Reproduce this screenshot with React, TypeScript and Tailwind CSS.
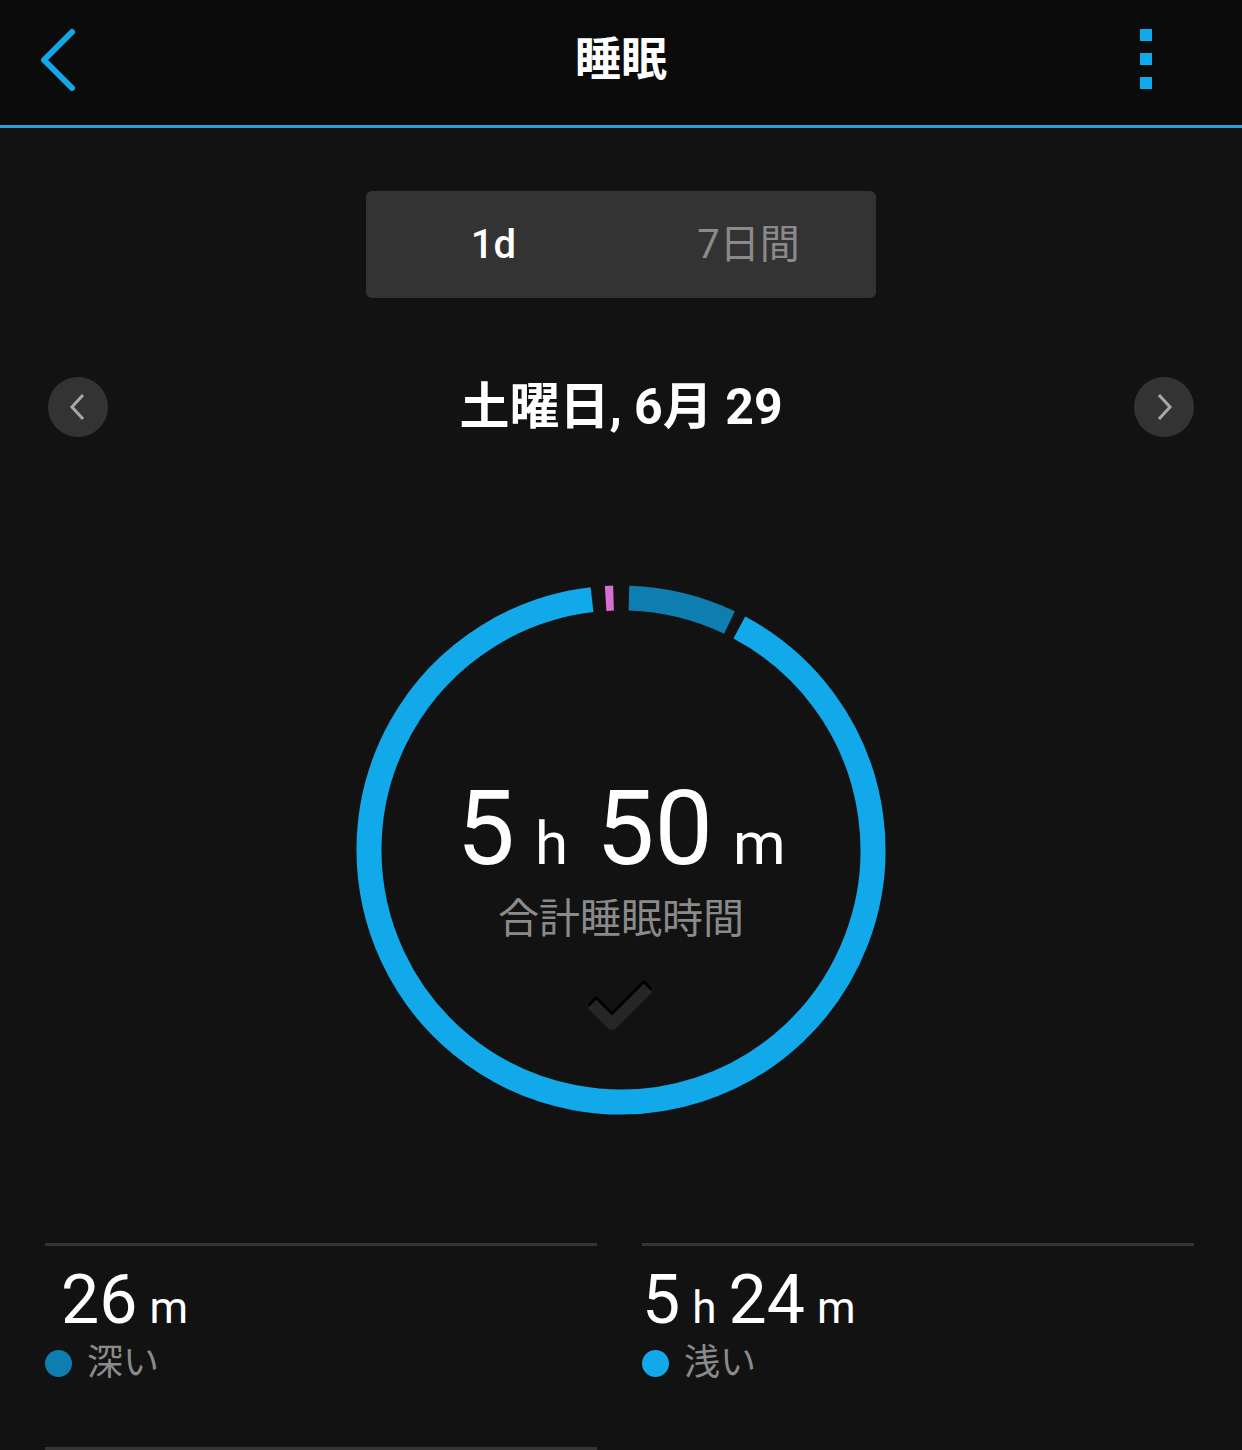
import React from 'react'

const FONT = { fontFamily: 'Roboto, "Noto Sans CJK JP", sans-serif' }

// 角度は真上を0°として時計回り
function arc(cx: number, cy: number, r: number, a0: number, a1: number) {
  const rad = (a: number) => (a * Math.PI) / 180
  const x0 = cx + r * Math.sin(rad(a0))
  const y0 = cy - r * Math.cos(rad(a0))
  const x1 = cx + r * Math.sin(rad(a1))
  const y1 = cy - r * Math.cos(rad(a1))
  const large = a1 - a0 > 180 ? 1 : 0
  return `M ${x0} ${y0} A ${r} ${r} 0 ${large} 1 ${x1} ${y1}`
}

function SleepRing() {
  const c = 270
  const r = 252
  return (
    <svg width="540" height="540" viewBox="0 0 540 540">
      <path d={arc(c, c, r, 28, 353.4)} fill="none" stroke="#12a9eb" strokeWidth="25" />
      <path d={arc(c, c, r, 1.8, 25.5)} fill="none" stroke="#0e7db0" strokeWidth="25" />
      <path d={arc(c, c, r, -3.5, -1.7)} fill="none" stroke="#d66fd0" strokeWidth="25" />
    </svg>
  )
}

function Stat({ parts, label, dot, indent }: { parts: [string, string][]; label: string; dot: string; indent: string }) {
  return (
    <div className="flex-1">
      <div className="h-[3px] bg-[#353535]" />
      <div className={`flex items-baseline pt-[20px] text-white ${indent}`}>
        {parts.map(([n, u], i) => (
          <React.Fragment key={i}>
            <span className="text-[68px] leading-none">{n}</span>
            <span className="text-[44px] leading-none ml-3 mr-3">{u}</span>
          </React.Fragment>
        ))}
      </div>
      <div className="flex items-center gap-[15px] mt-[11px]">
        <span className="w-[27px] h-[27px] rounded-full" style={{ background: dot }} />
        <span className="text-[36px] text-[#8a8a8a] leading-none">{label}</span>
      </div>
    </div>
  )
}

export default function App() {
  return (
    <div className="w-[1242px] h-[1450px] bg-[#121212] overflow-hidden" style={FONT}>
      {/* ヘッダー */}
      <header className="h-[125px] bg-[#0b0b0b] flex items-center justify-between px-[38px] relative">
        <svg className="-mt-[6px]" width="40" height="66" viewBox="0 0 40 66">
          <path d="M 34 5 L 6 33 L 34 61" fill="none" stroke="#12a9eb" strokeWidth="6" strokeLinecap="round" strokeLinejoin="round" />
        </svg>
        <h1 className="absolute left-1/2 -translate-x-1/2 -mt-[6px] text-white text-[46px] font-bold">睡眠</h1>
        <div className="flex flex-col gap-[12px] mr-[52px] -mt-[8px]">
          <span className="w-[12px] h-[12px] bg-[#12a9eb]" />
          <span className="w-[12px] h-[12px] bg-[#12a9eb]" />
          <span className="w-[12px] h-[12px] bg-[#12a9eb]" />
        </div>
      </header>
      <div className="h-[3px] bg-[#2a9fd8]" />

      {/* 期間切替 */}
      <div className="flex justify-center mt-[63px]">
        <div className="w-[510px] h-[107px] bg-[#333333] rounded-[6px] flex items-center">
          <div className="flex-1 text-center text-white text-[40px] font-medium">1d</div>
          <div className="flex-1 text-center text-[#8a8a8a] text-[40px]">7日間</div>
        </div>
      </div>

      {/* 日付 */}
      <div className="flex items-center justify-between px-[48px] mt-[79px] h-[60px]">
        <button className="w-[60px] h-[60px] rounded-full bg-[#333333] flex items-center justify-center">
          <svg width="20" height="30" viewBox="0 0 20 30">
            <path d="M 15 3 L 4 15 L 15 27" fill="none" stroke="#a8a8a8" strokeWidth="3" />
          </svg>
        </button>
        <div className="text-white text-[50px] font-bold leading-none">土曜日, 6月 29</div>
        <button className="w-[60px] h-[60px] rounded-full bg-[#333333] flex items-center justify-center">
          <svg width="20" height="30" viewBox="0 0 20 30">
            <path d="M 5 3 L 16 15 L 5 27" fill="none" stroke="#a8a8a8" strokeWidth="3" />
          </svg>
        </button>
      </div>

      {/* リング */}
      <div className="flex justify-center mt-[143px]">
        <div className="relative w-[540px] h-[540px]">
          <SleepRing />
          <div className="absolute inset-0 flex flex-col items-center pt-[197px]">
            <div className="flex items-baseline text-white">
              <span className="text-[104px] leading-none">5</span>
              <span className="text-[60px] leading-none ml-5 mr-7">h</span>
              <span className="text-[104px] leading-none">50</span>
              <span className="text-[60px] leading-none ml-5">m</span>
            </div>
            <div className="text-[41px] text-[#8a8a8a] mt-[18px] leading-none">合計睡眠時間</div>
            <svg className="mt-[38px]" width="70" height="56" viewBox="0 0 70 56">
              <path d="M 6 22 L 26 42 L 62 6" fill="none" stroke="#000" strokeWidth="12" strokeLinejoin="round" />
              <path d="M 6 26 L 26 46 L 62 10" fill="none" stroke="#262626" strokeWidth="12" strokeLinejoin="round" />
            </svg>
          </div>
        </div>
      </div>

      {/* 内訳 */}
      <div className="flex gap-[45px] pl-[45px] pr-[48px] mt-[123px]">
        <Stat parts={[['26', 'm']]} label="深い" dot="#0e7db0" indent="pl-4" />
        <Stat parts={[['5', 'h'], ['24', 'm']]} label="浅い" dot="#12a9eb" indent="pl-0" />
      </div>
      <div className="flex gap-[45px] pl-[45px] pr-[48px] mt-[66px]">
        <div className="flex-1 h-[3px] bg-[#353535]" />
        <div className="flex-1" />
      </div>
    </div>
  )
}
